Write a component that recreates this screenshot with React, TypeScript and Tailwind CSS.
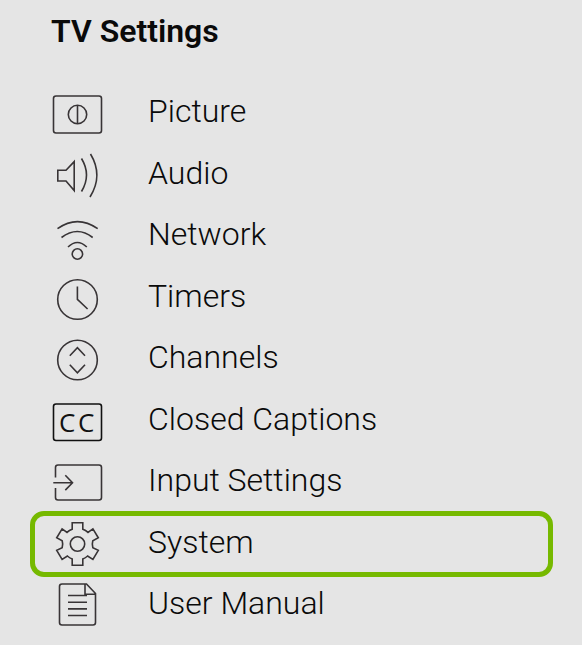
import React, { useState } from 'react';

const Icon = ({ children }: { children: React.ReactNode }) => (
  <svg
    viewBox="0 0 56 56"
    className="size-14 shrink-0"
    fill="none"
    stroke="#383436"
    strokeWidth="1.6"
    aria-hidden="true"
  >
    {children}
  </svg>
);

const items = [
  {
    label: 'Picture',
    icon: (
      <Icon>
        <rect x="3.5" y="12" width="48" height="37" rx="2.5" />
        <circle cx="27.5" cy="30.5" r="9.2" />
        <path d="M27.5 21.3v18.4" />
      </Icon>
    ),
  },
  {
    label: 'Audio',
    icon: (
      <Icon>
        <path d="M7.8 25.2h8.2l8.2-8.6v29l-8.2-9.6H7.8z" />
        <path d="M31.5 13.5Q41.5 30 31.5 46.5M40.5 9Q53.5 30.5 40 52" />
      </Icon>
    ),
  },
  {
    label: 'Network',
    icon: (
      <Icon>
        <path d="M7.5 21.7Q27.4 7.5 47.7 21.7M11.5 30.5Q27.4 18.5 42.7 30.5M18 40Q27.4 31 36.8 40" />
        <circle cx="27.4" cy="47" r="5.2" />
      </Icon>
    ),
  },
  {
    label: 'Timers',
    icon: (
      <Icon>
        <circle cx="27.5" cy="31.5" r="19.8" />
        <path d="M27.4 18.5v12.8l10.2 9.7" />
      </Icon>
    ),
  },
  {
    label: 'Channels',
    icon: (
      <Icon>
        <circle cx="27.5" cy="30" r="19.8" />
        <path d="M19.8 25.7l7.6-8 7.6 8M19.8 34.8l7.6 8 7.6-8" />
      </Icon>
    ),
  },
  {
    label: 'Closed Captions',
    icon: (
      <Icon>
        <rect x="3.5" y="13" width="48" height="36.5" rx="2.5" stroke="#111" />
        <g fill="#111" stroke="none" fontFamily="'Open Sans', sans-serif" fontSize="26" fontWeight="400">
          <text x="9" y="41">C</text>
          <text x="28" y="41">C</text>
        </g>
      </Icon>
    ),
  },
  {
    label: 'Input Settings',
    icon: (
      <Icon>
        <path d="M5.5 24.5v-10q0-2.5 2.5-2.5h41q2.5 0 2.5 2.5v30q0 2.5-2.5 2.5h-41q-2.5 0-2.5-2.5v-9.5" />
        <path d="M3.3 29.7h19M15.3 22.3l7.2 7.4-7.2 7.4" />
      </Icon>
    ),
  },
  {
    label: 'System',
    icon: (
      <Icon>
        <path d="M22.2 8.8h10.6v6.4q2.9.9 5.2 3.2l4.9-3.6 5.4 9-5.5 3q-1 3.4 0 6.8l5.5 2.8-5.4 9-5.3-3.4q-2.2 2-4.8 2.9v6.4h-10.6v-6.4q-2.6-.9-4.8-2.9l-5.3 3.4-5.4-9 5.5-2.8q1-3.4 0-6.8l-5.5-3 5.4-9 4.9 3.6q2.3-2.3 5.2-3.2z" />
        <circle cx="27.5" cy="30" r="7.2" />
      </Icon>
    ),
  },
  {
    label: 'User Manual',
    icon: (
      <Icon>
        <path d="M35 8H12q-2.5 0-2.5 2.5v36q0 2.5 2.5 2.5h31q2.5 0 2.5-2.5v-29L36.5 8H35v10.3h10.5" />
        <path d="M18 19.5h19M18 26.2h19M18 32.9h19M18 39.5h19" />
      </Icon>
    ),
  },
];

const App: React.FC = () => {
  const [selected, setSelected] = useState('System');

  return (
    <main className="min-h-screen bg-[#e5e5e5] pt-[11px] font-['Roboto',sans-serif] text-[32px] leading-10 text-[#0a0a0a]">
      <h1 className="px-[51px] font-semibold">TV Settings</h1>
      <ul className="mr-[29px] ml-[30px] pt-[30px]">
        {items.map((item) => (
          <li key={item.label} className="relative odd:h-[61px] even:h-[62px]">
            <button
              type="button"
              onClick={() => setSelected(item.label)}
              className="flex h-full w-full items-center gap-[42px] px-5 text-left font-light"
            >
              {item.icon}
              <span className="pb-px">{item.label}</span>
            </button>
            {/* Outline around the selected row */}
            {selected === item.label && (
              <div className="pointer-events-none absolute inset-x-0 top-0 -bottom-1 rounded-[14px] border-5 border-[#76b900]" />
            )}
          </li>
        ))}
      </ul>
    </main>
  );
};

export default App;
